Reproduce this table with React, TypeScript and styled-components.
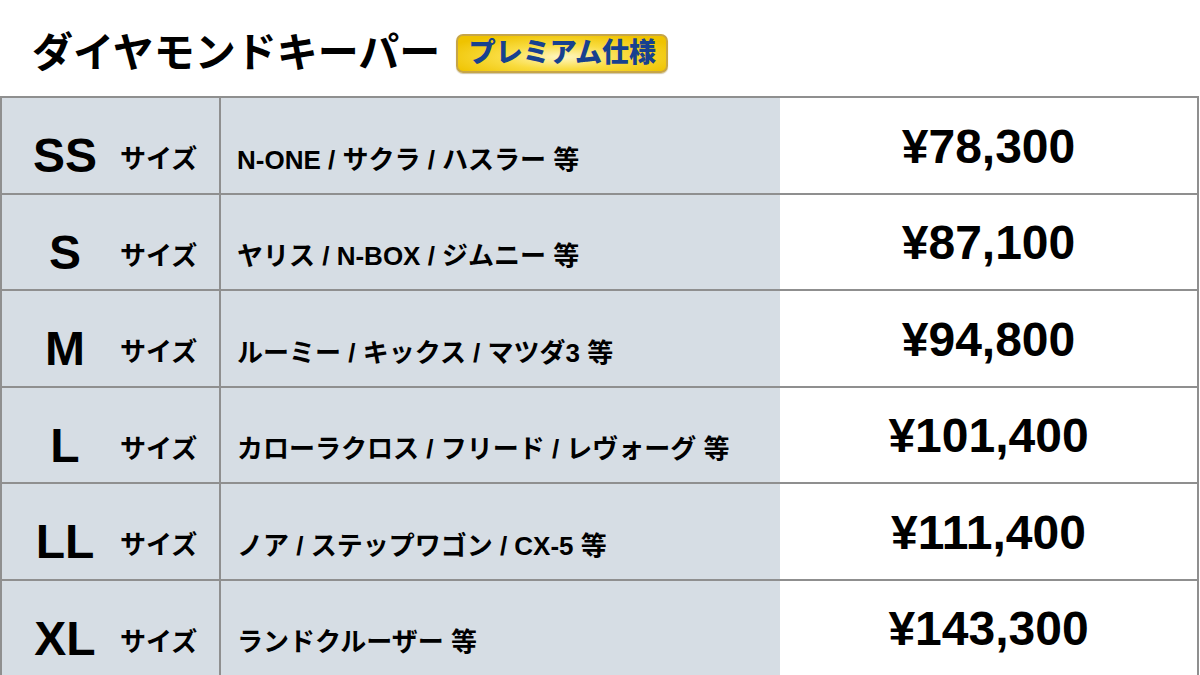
import React from "react";
import styled, { createGlobalStyle } from "styled-components";

const GlobalStyle = createGlobalStyle`
  html, body {
    margin: 0;
    padding: 0;
    background: #ffffff;
    overflow: hidden;
  }
  body {
    font-family: "Liberation Sans", "Noto Sans CJK JP", sans-serif;
    color: #000;
  }
`;

const Page = styled.div`
  width: 1200px;
  height: 675px;
  overflow: hidden;
  background: #fff;
`;

const Header = styled.div`
  height: 96px;
  display: flex;
  align-items: center;
  padding: 10px 0 0 32px;
  box-sizing: border-box;
  gap: 16px;
`;

const Title = styled.h1`
  margin: 0;
  font-size: 41px;
  font-weight: 700;
  line-height: 1;
`;

const Badge = styled.span`
  display: inline-flex;
  align-items: center;
  justify-content: center;
  width: 212px;
  height: 39px;
  box-sizing: border-box;
  border: 2px solid #c6a548;
  border-radius: 7px;
  background: radial-gradient(
    ellipse 60% 70% at 50% 60%,
    #fff7c4 0%,
    #f9dc40 50%,
    #efc300 100%
  );
  box-shadow: 0 1px 1px rgba(120, 90, 0, 0.35);
  color: #17418f;
  font-size: 27px;
  font-weight: 900;
  line-height: 1;
`;

const Table = styled.div`
  display: grid;
  grid-template-columns: 219px 559px 1fr;
  grid-template-rows: repeat(6, 96.5px);
  width: 1199px;
  border-left: 2px solid #8f8f8f;
  border-right: 2px solid #8f8f8f;
  border-top: 2px solid #8f8f8f;
  box-sizing: border-box;
`;

const Cell = styled.div<{ $tone: "gray" | "white" }>`
  display: flex;
  align-items: center;
  box-sizing: border-box;
  background: ${({ $tone }) => ($tone === "gray" ? "#d6dde4" : "#ffffff")};
  border-bottom: 2px solid #8f8f8f;
`;

const LabelCell = styled(Cell)`
  border-right: 2px solid #8f8f8f;
  padding-top: 22px;
`;

const SizeLetter = styled.span`
  width: 96px;
  margin-left: 15px;
  text-align: center;
  font-size: 48px;
  font-weight: 700;
  line-height: 1;
`;

const SizeWord = styled.span`
  margin-left: 7px;
  font-size: 26px;
  font-weight: 700;
  padding-top: 6px;
  line-height: 1;
`;

const DescCell = styled(Cell)`
  padding: 24px 0 0 16px;
  font-size: 26px;
  font-weight: 700;
  white-space: nowrap;
`;

const PriceCell = styled(Cell)`
  justify-content: center;
  padding-top: 2px;
  font-size: 48px;
  font-weight: 700;
`;

const rows = [
  { size: "SS", cars: "N-ONE / サクラ / ハスラー 等", price: "¥78,300" },
  { size: "S", cars: "ヤリス / N-BOX / ジムニー 等", price: "¥87,100" },
  { size: "M", cars: "ルーミー / キックス / マツダ3 等", price: "¥94,800" },
  { size: "L", cars: "カローラクロス / フリード / レヴォーグ 等", price: "¥101,400" },
  { size: "LL", cars: "ノア / ステップワゴン / CX-5 等", price: "¥111,400" },
  { size: "XL", cars: "ランドクルーザー 等", price: "¥143,300" },
];

export default function App() {
  return (
    <Page>
      <GlobalStyle />
      <Header>
        <Title>ダイヤモンドキーパー</Title>
        <Badge>プレミアム仕様</Badge>
      </Header>
      <Table>
        {rows.map((r) => (
          <React.Fragment key={r.size}>
            <LabelCell $tone="gray">
              <SizeLetter>{r.size}</SizeLetter>
              <SizeWord>サイズ</SizeWord>
            </LabelCell>
            <DescCell $tone="gray">{r.cars}</DescCell>
            <PriceCell $tone="white">{r.price}</PriceCell>
          </React.Fragment>
        ))}
      </Table>
    </Page>
  );
}
